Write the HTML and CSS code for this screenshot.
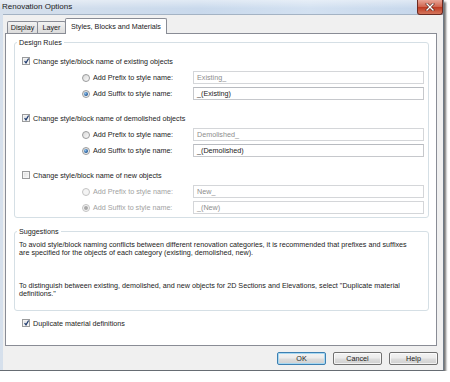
FILE: index.html
```html
<!DOCTYPE html>
<html lang="en">
<head>
    <meta charset="UTF-8">
    <title>Renovation Options</title>
    <link rel="stylesheet" href="styles.css">
</head>
<body>
<div class="window">
    <div class="titlebar">
        <span class="title">Renovation Options</span>
        <span class="close">
            <svg width="10" height="8" viewBox="0 0 10 8">
                <path d="M2 1 L8 7 M8 1 L2 7" stroke="#5a2219" stroke-width="2.6" stroke-linecap="square"/>
                <path d="M2 1 L8 7 M8 1 L2 7" stroke="#fff" stroke-width="1.4" stroke-linecap="square"/>
            </svg>
        </span>
    </div>

    <div class="client">
        <div class="tabs">
            <div class="tab tab-display">Display</div>
            <div class="tab tab-layer">Layer</div>
            <div class="tab tab-styles active">Styles, Blocks and Materials</div>
        </div>

        <div class="panel">
            <fieldset class="group rules">
                <legend>Design Rules</legend>
                <div class="rules-body">
                    <div class="section">
                        <div class="check"><span class="box checked"></span>Change style/block name of existing objects</div>
                        <div class="option">
                            <span class="radio"></span>
                            <span class="opt-label">Add Prefix to style name:</span>
                            <span class="field dim">Existing_</span>
                        </div>
                        <div class="option">
                            <span class="radio on"></span>
                            <span class="opt-label">Add Suffix to style name:</span>
                            <span class="field">_(Existing)</span>
                        </div>
                    </div>

                    <div class="section">
                        <div class="check"><span class="box checked"></span>Change style/block name of demolished objects</div>
                        <div class="option">
                            <span class="radio"></span>
                            <span class="opt-label">Add Prefix to style name:</span>
                            <span class="field dim">Demolished_</span>
                        </div>
                        <div class="option">
                            <span class="radio on"></span>
                            <span class="opt-label">Add Suffix to style name:</span>
                            <span class="field">_(Demolished)</span>
                        </div>
                    </div>

                    <div class="section disabled">
                        <div class="check"><span class="box"></span>Change style/block name of new objects</div>
                        <div class="option">
                            <span class="radio"></span>
                            <span class="opt-label">Add Prefix to style name:</span>
                            <span class="field dim">New_</span>
                        </div>
                        <div class="option">
                            <span class="radio on"></span>
                            <span class="opt-label">Add Suffix to style name:</span>
                            <span class="field dim">_(New)</span>
                        </div>
                    </div>
                </div>
            </fieldset>

            <fieldset class="group suggestions">
                <legend>Suggestions</legend>
                <div class="suggest-body">
                    <p>To avoid style/block naming conflicts between different renovation categories, it is recommended that prefixes and suffixes<br>
                    are specified for the objects of each category (existing, demolished, new).</p>
                    <p class="second">To distinguish between existing, demolished, and new objects for 2D Sections and Elevations, select "Duplicate material<br>
                    definitions."</p>
                </div>
            </fieldset>

            <div class="check dup"><span class="box checked"></span>Duplicate material definitions</div>
        </div>

        <div class="buttons">
            <span class="btn default">OK</span>
            <span class="btn">Cancel</span>
            <span class="btn">Help</span>
        </div>
    </div>
</div>
</body>
</html>
```

FILE: styles.css
```css
* {
    box-sizing: border-box;
}

body {
    margin: 0;
    background: #fff;
    font-family: "Liberation Sans", Arial, sans-serif;
    font-size: 7.2px;
    color: #222;
}

.window {
    width: 444px;
    height: 371px;
    display: flex;
    flex-direction: column;
    border-right: 1px solid #6f7a86;
    border-bottom: 1px solid #666c73;
    box-shadow: 2px 2px 2px rgba(0, 0, 0, 0.55);
    background: linear-gradient(to right, #d6e0ec, #c9d9ec 45%, #d3e1f1 70%, #c4d5ea);
}

.titlebar {
    height: 14px;
    display: flex;
    align-items: flex-start;
    padding-left: 2px;
    background: linear-gradient(to bottom, rgba(255, 255, 255, 0.45), rgba(255, 255, 255, 0) 60%);
}

.title {
    font-size: 8px;
    line-height: 14px;
    color: #1b1b1b;
}

.close {
    margin-left: auto;
    width: 26px;
    height: 15px;
    display: flex;
    align-items: center;
    justify-content: center;
    border: 1px solid #6b2b22;
    border-top: none;
    border-radius: 0 0 3px 3px;
    background: linear-gradient(to bottom, #e9a597, #d06650 48%, #be3a22 52%, #d5765c);
    position: relative;
    z-index: 2;
}

.client {
    flex: 1;
    margin-left: 3px;
    border-top: 1px solid #a4b3c4;
    background: #f0f0f0;
    padding: 3px 6px 0 2px;
    display: flex;
    flex-direction: column;
}

.tabs {
    display: flex;
    align-items: flex-end;
    height: 16px;
    margin-left: 2px;
    margin-bottom: -1px;
}

.tab {
    height: 12px;
    margin-bottom: 1px;
    margin-right: -1px;
    border: 1px solid #898c95;
    border-bottom: none;
    border-radius: 2px 2px 0 0;
    background: linear-gradient(to bottom, #f3f3f3, #e6e6e6 50%, #dcdcdc);
    line-height: 11px;
    text-align: center;
}

.tab-display {
    width: 31px;
}

.tab-layer {
    width: 29px;
}

.tab-styles {
    width: 102px;
}

.tab.active {
    height: 16px;
    margin-bottom: 0;
    background: #fff;
    line-height: 15px;
    position: relative;
    z-index: 1;
}

.panel {
    height: 313px;
    border: 1px solid #898c95;
    background: #fff;
    display: flex;
    flex-direction: column;
}

.group {
    margin: 4px 7px 0 8px;
    padding: 0;
    border: 1px solid #d5dfe5;
    border-radius: 3px;
    min-width: 0;
}

.group legend {
    margin-left: 2px;
    padding: 0 2px;
    line-height: 9px;
}

.rules-body {
    padding: 7px 4px 3px 7px;
}

.section {
    margin-bottom: 11px;
}

.section:last-child {
    margin-bottom: 0;
}

.check {
    display: flex;
    align-items: center;
    gap: 3px;
    height: 14px;
    white-space: nowrap;
}

.box {
    width: 8px;
    height: 8px;
    border: 1px solid #9a9b9c;
    background: linear-gradient(135deg, #dedede, #f8f8f8);
    box-shadow: inset 0 0 0 1px #f4f4f4;
    position: relative;
}

.box.checked::after {
    content: "";
    position: absolute;
    left: 1px;
    top: 0;
    width: 5px;
    height: 6px;
    background: no-repeat center / contain url("data:image/svg+xml,%3Csvg xmlns='http://www.w3.org/2000/svg' viewBox='0 0 5 6'%3E%3Cpath d='M0.6 3.2 L2 4.9 L4.6 0.6' fill='none' stroke='%231d3a6e' stroke-width='1.2'/%3E%3C/svg%3E");
}

.option {
    display: flex;
    align-items: center;
    height: 13px;
    margin-top: 3px;
    padding-left: 60px;
    white-space: nowrap;
}

.radio {
    width: 8px;
    height: 8px;
    margin-right: 3px;
    border: 1px solid #9a9b9c;
    border-radius: 50%;
    background: linear-gradient(135deg, #d8d8d8, #fafafa);
    display: flex;
    align-items: center;
    justify-content: center;
}

.radio.on::after {
    content: "";
    width: 4px;
    height: 4px;
    border-radius: 50%;
    background: radial-gradient(circle at 35% 35%, #8fc3f0, #1d5593 70%);
}

.opt-label {
    width: 100px;
}

.field {
    flex: 1;
    height: 13px;
    border: 1px solid #c6c8cc;
    border-top-color: #b8bbc0;
    background: #fff;
    padding-left: 3px;
    line-height: 11px;
    color: #222;
}

.field.dim {
    color: #8d8d8d;
    border-color: #d4d6d9;
}

.section.disabled .opt-label {
    color: #a2a2a2;
}

.section.disabled .radio {
    border-color: #c4c4c4;
    background: #f4f4f4;
}

.section.disabled .radio.on::after {
    background: #a8a8a8;
}

.suggestions {
    margin-top: 9px;
}

.suggest-body {
    padding: 5px 4px 12px 4px;
    line-height: 8px;
    white-space: nowrap;
}

.suggest-body p {
    margin: 0;
}

.suggest-body .second {
    margin-top: 25px;
}

.check.dup {
    margin-top: 5px;
    padding-left: 16px;
}

.buttons {
    display: flex;
    justify-content: flex-end;
    gap: 7px;
    margin-top: 6px;
    margin-right: -1px;
}

.btn {
    width: 49px;
    height: 13px;
    border: 1px solid #707070;
    border-radius: 2px;
    background: linear-gradient(to bottom, #f3f3f3, #ebebeb 48%, #dddddd 52%, #d0d0d0);
    box-shadow: inset 0 0 0 1px rgba(255, 255, 255, 0.7);
    text-align: center;
    line-height: 11px;
}

.btn.default {
    border-color: #3c7fb1;
    box-shadow: inset 0 0 0 1px #a7d8f2;
}
```
